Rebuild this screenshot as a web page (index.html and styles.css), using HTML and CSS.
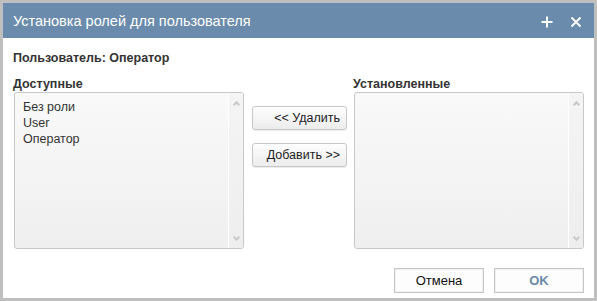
FILE: index.html
```html
<!DOCTYPE html>
<html lang="ru">
<head>
    <meta charset="UTF-8">
    <title>Установка ролей для пользователя</title>
    <link rel="stylesheet" href="styles.css">
</head>
<body>
    <div class="dialog">
        <div class="dialog-header">
            <span class="dialog-title">Установка ролей для пользователя</span>
            <span class="header-tools">
                <svg class="tool" width="12" height="12" viewBox="0 0 12 12">
                    <path d="M6 0.5V11.5M0.5 6H11.5" stroke="#fff" stroke-width="2" fill="none"/>
                </svg>
                <svg class="tool" width="12" height="12" viewBox="0 0 12 12">
                    <path d="M1.5 1.5L10.5 10.5M10.5 1.5L1.5 10.5" stroke="#fff" stroke-width="1.8" fill="none"/>
                </svg>
            </span>
        </div>

        <div class="dialog-body">
            <div class="user-line">Пользователь: Оператор</div>

            <div class="roles">
                <div class="col">
                    <div class="col-label">Доступные</div>
                    <div class="listbox">
                        <ul class="items">
                            <li>Без роли</li>
                            <li>User</li>
                            <li>Оператор</li>
                        </ul>
                        <div class="scrollbar">
                            <span class="arrow up"></span>
                            <span class="arrow down"></span>
                        </div>
                    </div>
                </div>

                <div class="col middle">
                    <button class="move-button">&lt;&lt; Удалить</button>
                    <button class="move-button">Добавить &gt;&gt;</button>
                </div>

                <div class="col">
                    <div class="col-label">Установленные</div>
                    <div class="listbox">
                        <ul class="items"></ul>
                        <div class="scrollbar">
                            <span class="arrow up"></span>
                            <span class="arrow down"></span>
                        </div>
                    </div>
                </div>
            </div>
        </div>

        <div class="dialog-footer">
            <button class="footer-button">Отмена</button>
            <button class="footer-button ok">OK</button>
        </div>
    </div>
</body>
</html>
```

FILE: styles.css
```css
body {
    margin: 0;
    font-family: 'Liberation Sans', Arial, sans-serif;
    font-size: 12.5px;
    color: #333;
    background: #fff;
}
.dialog {
    width: 597px;
    height: 301px;
    box-sizing: border-box;
    border: 3px solid #bfbfbf;
    display: flex;
    flex-direction: column;
    background: #fff;
}
.dialog-header {
    height: 35px;
    flex: none;
    background: #6a8bab;
    color: #fff;
    display: flex;
    align-items: center;
    justify-content: space-between;
    padding: 0 12px 0 10px;
}
.dialog-title {
    font-size: 14.5px;
}
.header-tools {
    display: flex;
    gap: 17px;
    align-items: center;
    padding-top: 2px;
}
.tool {
    display: block;
}
.dialog-body {
    flex: 1;
    padding: 12px 11px 0 11px;
}
.user-line {
    font-weight: bold;
    line-height: 16px;
    margin-left: -1px;
}
.roles {
    display: grid;
    grid-template-columns: 230px 95px 229px;
    column-gap: 8px;
    margin-top: 10px;
}
.roles .col:last-child {
    margin-left: -1px;
}
.col-label {
    font-weight: bold;
    line-height: 16px;
    margin-left: -1px;
}
.listbox {
    height: 157px;
    box-sizing: border-box;
    border: 1px solid #c8c8c8;
    border-radius: 3px;
    background: linear-gradient(#f9f9f9, #efefef);
    display: flex;
    overflow: hidden;
}
.items {
    flex: 1;
    list-style: none;
    margin: 0;
    padding: 6px 8px;
    line-height: 16px;
}
.scrollbar {
    width: 15px;
    flex: none;
    border-left: 1px solid #fff;
    background: linear-gradient(#f4f4f4, #eeeeee);
    display: flex;
    flex-direction: column;
    justify-content: space-between;
    align-items: center;
    padding: 7px 0 8px;
    box-sizing: border-box;
}
.arrow {
    width: 5px;
    height: 5px;
    border-left: 2px solid #c8c8c8;
    border-top: 2px solid #c8c8c8;
    box-sizing: border-box;
}
.arrow.up {
    transform: rotate(45deg);
    margin-top: 2px;
}
.arrow.down {
    transform: rotate(225deg);
}
.middle {
    display: flex;
    flex-direction: column;
    gap: 13px;
    padding-top: 30px;
}
.move-button {
    height: 24px;
    width: 95px;
    font-family: inherit;
    font-size: 12.5px;
    color: #222;
    text-align: right;
    padding: 0 6px 0 0;
    border: 1px solid #c8c8c8;
    border-radius: 3px;
    background: linear-gradient(#fefefe, #ececec);
    box-shadow: 0 1px 1px rgba(0,0,0,0.08);
}
.dialog-footer {
    display: flex;
    justify-content: flex-end;
    gap: 10px;
    padding: 0 10px 5px 0;
}
.footer-button {
    width: 90px;
    height: 25px;
    font-family: inherit;
    font-size: 13px;
    color: #111;
    border: 1px solid #c6c6c6;
    box-shadow: inset 0 0 0 1px #f0f0f0;
    background: #fdfdfd;
    border-radius: 0;
    padding: 0;
}
.footer-button.ok {
    color: #6a8bab;
    font-weight: bold;
}
```
